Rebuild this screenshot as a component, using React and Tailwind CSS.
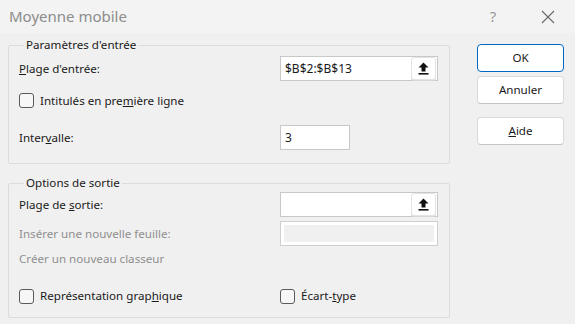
import React from 'react';

// small "collapse to sheet" icon used in the range pickers
function PickIcon() {
  return (
    <svg width="11" height="13" viewBox="0 0 11 13">
      <path d="M5.5 0.5 L10.5 5.5 L7.5 5.5 L7.5 9.5 L3.5 9.5 L3.5 5.5 L0.5 5.5 Z" fill="#111" />
      <rect x="0.5" y="11" width="10" height="1.6" fill="#111" />
    </svg>
  );
}

function RangeInput({ value }) {
  return (
    <div className="flex h-[25px] w-[158px] items-center border border-[#c8c8c8] bg-white pl-[4px] pr-[1px]">
      <span className="flex-1 text-[12px] text-[#1a1a1a]">{value}</span>
      <div className="flex h-[23px] w-[25px] items-center justify-center rounded-[3px] border border-[#e3e3e3] bg-white shadow-[0_1px_0_#d8d8d8]">
        <PickIcon />
      </div>
    </div>
  );
}

function Check({ label }) {
  return (
    <label className="flex items-center gap-[6px] text-[11.6px] text-[#1a1a1a]">
      <span className="h-[15px] w-[15px] rounded-[3px] border border-[#5a5a5a] bg-[#f7f7f7]" />
      {label}
    </label>
  );
}

function Group({ title, children, className }) {
  return (
    <fieldset className={`rounded-[2px] border border-[#dcdcdc] pl-[10px] pr-[11px] ${className}`}>
      <legend className="ml-[5px] px-[2px] text-[11.6px] leading-[16px] text-[#1a1a1a]">{title}</legend>
      {children}
    </fieldset>
  );
}

function Btn({ children, primary }) {
  return (
    <button
      className={`h-[28px] w-[87px] rounded-[4px] bg-white text-[11.6px] text-[#1a1a1a] ${
        primary ? 'border border-[#0067c0]' : 'border border-[#dadada] border-b-[#c4c4c4]'
      }`}
    >
      {children}
    </button>
  );
}

export default function App() {
  return (
    <div className="flex h-[324px] w-[575px] flex-col bg-[#f0f0f0] font-['Noto_Sans',sans-serif] text-[#1a1a1a]">
      {/* title bar */}
      <div className="flex h-[33px] items-center bg-[#f3f3f3] pl-[9px]">
        <span className="flex-1 text-[15px] text-[#8c8c8c]">Moyenne mobile</span>
        <span className="w-[30px] text-center text-[15px] text-[#9a9a9a]">?</span>
        <div className="ml-[13px] flex w-[54px] justify-center">
          <svg width="14" height="14" viewBox="0 0 14 14">
            <path d="M1 1 L13 13 M13 1 L1 13" stroke="#6a6a6a" strokeWidth="1.1" />
          </svg>
        </div>
      </div>

      <div className="flex flex-1 pl-[8px] pt-[4px]">
        {/* left column: option groups */}
        <div className="flex w-[442px] flex-col">
          <Group title="Paramètres d'entrée" className="h-[127px]">
            <div className="mt-[3px] flex items-center justify-between">
              <span className="text-[11.6px]">
                <u>P</u>lage d'entrée:
              </span>
              <RangeInput value="$B$2:$B$13" />
            </div>
            <div className="mt-[11px]">
              <Check label={<span>Intitulés en pre<u>m</u>ière ligne</span>} />
            </div>
            <div className="mt-[16px] flex items-center justify-between">
              <span className="text-[11.6px]">
                Inter<u>v</u>alle:
              </span>
              <div className="mr-[88px] flex h-[25px] w-[70px] items-center border border-[#c8c8c8] bg-white pl-[4px] text-[12px]">
                3
              </div>
            </div>
          </Group>

          <Group title="Options de sortie" className="mt-[11px] h-[143px]">
            <div className="mt-[1px] flex items-center justify-between">
              <span className="text-[11.6px]">
                Plage de <u>s</u>ortie:
              </span>
              <RangeInput value="" />
            </div>
            <div className="mt-[4px] flex items-center justify-between">
              <span className="text-[11.6px] text-[#8f8f8f]">Insérer une nouvelle feuille:</span>
              <div className="h-[25px] w-[158px] border border-[#cfcfcf] bg-white p-[3px]">
                <div className="h-full w-full bg-[#f0f0f0]" />
              </div>
            </div>
            <div className="mt-[4px] text-[11.6px] text-[#8f8f8f]">Créer un nouveau classeur</div>
            <div className="mt-[20px] flex">
              <div className="w-[261px]">
                <Check label={<span>Représentation grap<u>h</u>ique</span>} />
              </div>
              <Check label={<span>Écart-<u>t</u>ype</span>} />
            </div>
          </Group>
        </div>

        {/* right column: buttons */}
        <div className="ml-[27px] flex flex-col pt-[7px]">
          <Btn primary>OK</Btn>
          <div className="mt-[4px]">
            <Btn>Annuler</Btn>
          </div>
          <div className="mt-[13px]">
            <Btn>
              <u>A</u>ide
            </Btn>
          </div>
        </div>
      </div>
    </div>
  );
}
